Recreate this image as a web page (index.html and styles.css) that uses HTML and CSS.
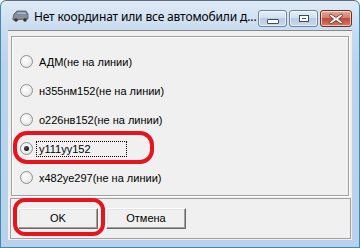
FILE: index.html
```html
<!DOCTYPE html>
<html lang="ru">
<head>
  <meta charset="UTF-8">
  <title>Нет координат</title>
  <link rel="stylesheet" href="styles.css">
</head>
<body>
  <div class="window">
    <div class="titlebar">
      <svg class="appicon" width="18" height="14" viewBox="0 0 18 14">
        <path d="M2 9 L3 5 L6 2 L15 2 L17 5 L17 10 L2 11 Z" fill="#8a8f96" stroke="#4e5359" stroke-width="0.8"/>
        <path d="M6.5 3 L14.5 3 L16 5.5 L5 5.5 Z" fill="#aab8d8" stroke="#5d6a8a" stroke-width="0.5"/>
        <circle cx="5" cy="11" r="1.8" fill="#333"/>
        <circle cx="14" cy="11" r="1.8" fill="#333"/>
      </svg>
      <span class="title">Нет координат или все автомобили д...</span>
      <div class="caption">
        <span class="cbtn"><span class="glyph-min"></span></span>
        <span class="cbtn"><span class="glyph-max"></span></span>
        <span class="cbtn close">
          <svg width="16" height="12" viewBox="0 0 16 12">
            <path d="M3 1 L8 4.5 L13 1 L15 2.5 L10.5 6 L15 9.5 L13 11 L8 7.5 L3 11 L1 9.5 L5.5 6 L1 2.5 Z" fill="#fff" stroke="#5a2a24" stroke-width="0.8"/>
          </svg>
        </span>
      </div>
    </div>
    <div class="client">
      <div class="group">
        <div class="opt"><span class="radio"></span><span class="label">АДМ(не на линии)</span></div>
        <div class="opt"><span class="radio"></span><span class="label">н355нм152(не на линии)</span></div>
        <div class="opt"><span class="radio"></span><span class="label">о226нв152(не на линии)</span></div>
        <div class="opt"><span class="radio checked"></span><span class="label focus">у111уу152</span></div>
        <div class="opt"><span class="radio"></span><span class="label">х482уе297(не на линии)</span></div>
      </div>
      <div class="panel">
        <button class="btn">OK</button>
        <button class="btn">Отмена</button>
      </div>
      <div class="mark mark-radio"></div>
      <div class="mark mark-ok"></div>
    </div>
  </div>
</body>
</html>
```

FILE: styles.css
```css
body {
  margin: 0;
  background: #fff;
}
.window {
  position: relative;
  width: 360px;
  height: 248px;
  box-sizing: border-box;
  border: 1px solid #3c8db0;
  border-top-color: #5b6f82;
  border-radius: 6px 6px 0 0;
  background: linear-gradient(to bottom, #dfeaf6 0px, #c9dcf0 28px, #bcd3ec 60px, #b9d1ea 100%);
  padding: 0 7px 7px 7px;
  font-family: "Liberation Sans", Tahoma, sans-serif;
  font-size: 11px;
  color: #000;
}
.titlebar {
  height: 29px;
  display: flex;
  align-items: center;
}
.appicon {
  margin-left: 3px;
  margin-top: 1px;
}
.title {
  margin-left: 5px;
  margin-top: 1px;
  font-family: "Noto Sans", sans-serif;
  font-size: 12px;
  letter-spacing: -0.15px;
  flex: 1;
  white-space: nowrap;
}
.caption {
  display: flex;
  gap: 2px;
  align-self: flex-start;
  margin-top: 9px;
}
.cbtn {
  width: 29px;
  height: 17px;
  box-sizing: border-box;
  border: 1px solid #6f819b;
  border-radius: 3px;
  background: linear-gradient(to bottom, #e6eef8 0%, #d2e0f0 45%, #b7cbe4 50%, #c8d9ee 100%);
  box-shadow: inset 0 0 0 1px rgba(255,255,255,0.6);
  display: flex;
  align-items: center;
  justify-content: center;
}
.cbtn.close {
  width: 32px;
  border-color: #6b2f28;
  background: linear-gradient(to bottom, #e6a89c 0%, #d77d6c 45%, #c34a36 50%, #d47a62 100%);
}
.glyph-min {
  width: 10px;
  height: 3px;
  margin-top: 5px;
  background: #fff;
  border: 1px solid #3c4c64;
  border-radius: 1px;
}
.glyph-max {
  width: 8px;
  height: 5px;
  border: 1px solid #3c4c64;
  box-shadow: inset 0 0 0 2px #fff, inset 0 0 0 3px #3c4c64;
  background: #e8eef6;
}
.client {
  position: relative;
  height: 210px;
  background: #f0f0f0;
  border-top: 1px solid #8a8a8a;
  box-sizing: border-box;
  padding: 5px 1px 0 3px;
}
.group {
  height: 160px;
  box-sizing: border-box;
  border: 1px solid #a0a0a0;
  box-shadow: inset 1px 1px 0 #fff, 1px 1px 0 #fff;
  padding: 10px 0 0 8px;
  margin-right: 2px;
}
.opt {
  height: 29px;
  display: flex;
  align-items: center;
}
.radio {
  width: 13px;
  height: 13px;
  box-sizing: border-box;
  border-radius: 50%;
  border: 1px solid #8e8f8f;
  background: radial-gradient(circle at 40% 40%, #ffffff 0%, #f0f0f0 50%, #d6d6d6 100%);
  margin-right: 3px;
  position: relative;
}
.radio.checked::after {
  content: "";
  position: absolute;
  left: 3px;
  top: 3px;
  width: 5px;
  height: 5px;
  border-radius: 50%;
  background: radial-gradient(circle at 40% 40%, #555 0%, #111 70%);
}
.label {
  padding: 1px 2px;
  border: 1px dotted transparent;
}
.label.focus {
  border-color: #000;
  padding-right: 35px;
}
.panel {
  margin-top: 2px;
  margin-left: -1px;
  height: 41px;
  box-sizing: border-box;
  border: 1px solid #a0a0a0;
  display: flex;
  align-items: center;
  gap: 8px;
  padding-left: 7px;
}
.btn {
  width: 80px;
  height: 21px;
  padding: 0;
  margin-top: -1px;
  font-family: "Liberation Sans", Tahoma, sans-serif;
  font-size: 11px;
  color: #000;
  background: #f0f0f0;
  border: 1px solid;
  border-color: #fff #696969 #696969 #fff;
  box-shadow: inset -1px -1px 0 #a0a0a0, inset 1px 1px 0 #e3e3e3;
}
.mark {
  position: absolute;
  border: 4px solid #e6141c;
  border-radius: 14px;
  box-sizing: border-box;
}
.mark-radio {
  left: 5px;
  top: 100px;
  width: 141px;
  height: 33px;
}
.mark-ok {
  left: 5px;
  top: 167px;
  width: 92px;
  height: 38px;
  border-radius: 12px;
}
```
